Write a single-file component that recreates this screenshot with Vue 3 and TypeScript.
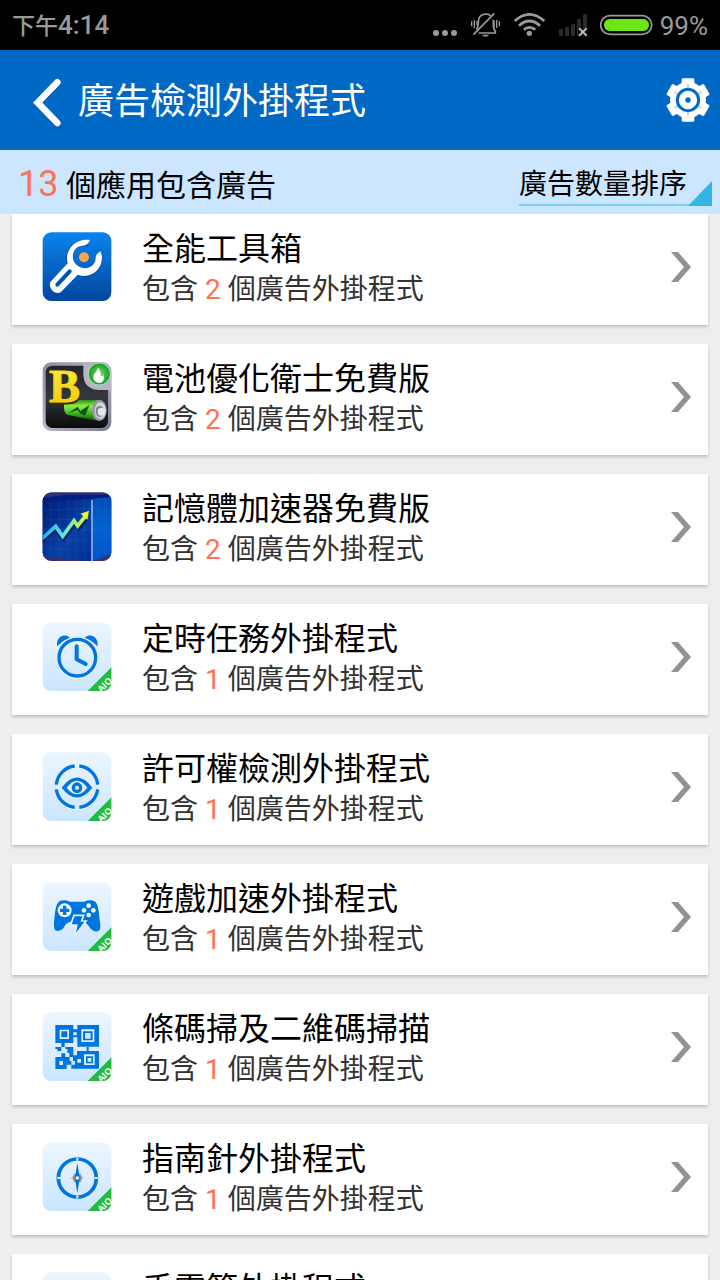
<script setup lang="ts">
import { ref } from 'vue'

type IconKind = 'toolbox' | 'battery' | 'memory' | 'alarm' | 'eye' | 'game' | 'qr' | 'compass' | 'torch'

interface AppEntry {
  name: string
  count: number
  icon: IconKind
  plugin: boolean
}

const total = 13
const sort = ref('count')

const apps: AppEntry[] = [
  { name: '全能工具箱', count: 2, icon: 'toolbox', plugin: false },
  { name: '電池優化衛士免費版', count: 2, icon: 'battery', plugin: false },
  { name: '記憶體加速器免費版', count: 2, icon: 'memory', plugin: false },
  { name: '定時任務外掛程式', count: 1, icon: 'alarm', plugin: true },
  { name: '許可權檢測外掛程式', count: 1, icon: 'eye', plugin: true },
  { name: '遊戲加速外掛程式', count: 1, icon: 'game', plugin: true },
  { name: '條碼掃及二維碼掃描', count: 1, icon: 'qr', plugin: true },
  { name: '指南針外掛程式', count: 1, icon: 'compass', plugin: true },
  { name: '手電筒外掛程式', count: 1, icon: 'torch', plugin: true },
]
</script>

<template>
  <div class="screen">
    <svg class="defs" width="0" height="0" aria-hidden="true">
      <defs>
        <clipPath id="tile"><rect x="38" y="37" width="206" height="206" rx="26" /></clipPath>
        <linearGradient id="g-blue" x1="0" y1="0" x2="0" y2="1">
          <stop offset="0" stop-color="#0a84ee" /><stop offset="1" stop-color="#00459c" />
        </linearGradient>
        <linearGradient id="g-pale" x1="0" y1="0" x2="0" y2="1">
          <stop offset="0" stop-color="#edf6ff" /><stop offset="1" stop-color="#cbe5ff" />
        </linearGradient>
        <linearGradient id="g-steel" x1="0" y1="0" x2="1" y2="1">
          <stop offset="0" stop-color="#8d8d98" /><stop offset="0.5" stop-color="#b5b5c4" /><stop offset="1" stop-color="#77778a" />
        </linearGradient>
        <linearGradient id="g-dark" x1="0" y1="0" x2="0" y2="1">
          <stop offset="0" stop-color="#22262a" /><stop offset="0.5" stop-color="#34383c" /><stop offset="1" stop-color="#0a0a0a" />
        </linearGradient>
        <linearGradient id="g-cell" x1="0" y1="0" x2="0" y2="1">
          <stop offset="0" stop-color="#2a8a10" /><stop offset="0.3" stop-color="#8df04a" /><stop offset="0.65" stop-color="#3cb81c" /><stop offset="1" stop-color="#0f5a08" />
        </linearGradient>
        <linearGradient id="g-gold" x1="0" y1="0" x2="0" y2="1">
          <stop offset="0" stop-color="#fff04a" /><stop offset="1" stop-color="#f0c400" />
        </linearGradient>
        <linearGradient id="g-front" x1="0" y1="0" x2="1" y2="1">
          <stop offset="0" stop-color="#001a78" /><stop offset="0.6" stop-color="#0840a4" /><stop offset="1" stop-color="#002e94" />
        </linearGradient>
        <linearGradient id="g-side" x1="0" y1="0" x2="0" y2="1">
          <stop offset="0" stop-color="#004cba" /><stop offset="0.5" stop-color="#0062d0" /><stop offset="1" stop-color="#0052cc" />
        </linearGradient>
        <linearGradient id="g-trend" gradientUnits="userSpaceOnUse" x1="38" y1="0" x2="178" y2="0">
          <stop offset="0" stop-color="#1ea8f0" /><stop offset="0.45" stop-color="#5ae8dc" /><stop offset="0.8" stop-color="#b8f45a" /><stop offset="1" stop-color="#f0f81e" />
        </linearGradient>
        <radialGradient id="g-leaf">
          <stop offset="0" stop-color="#6fe06a" /><stop offset="1" stop-color="#169a26" />
        </radialGradient>
      </defs>
    </svg>

    <div class="status">
      <span class="clock"><span class="ampm">下午</span>4:14</span>
      <div class="indicators">
        <svg width="26" height="26" viewBox="36 36 78 78" fill="#9a9a9a" aria-hidden="true">
          <circle cx="48" cy="99" r="9" /><circle cx="75" cy="99" r="9" /><circle cx="102" cy="99" r="9" />
        </svg>
        <svg width="31" height="26" viewBox="150 36 93 78" fill="none" stroke="#9a9a9a" aria-hidden="true">
          <path stroke-width="5" d="M169 88 Q175 82 175 70 V66 Q175 44 197 42 Q207 42 213 48 M220 59 V74 Q220 88 226 94 V99 H176 M160 104 L223 40" />
          <path stroke-width="4" d="M155 64 V79 M163 60 V84 M171 62 V76 M222 62 V82 M230 60 V84 M238 64 V79" />
          <path fill="#9a9a9a" stroke="none" d="M185 104 H208 Q197 116 185 104 Z" />
        </svg>
        <svg width="33" height="26" viewBox="279 36 99 78" fill="none" stroke="#9a9a9a" stroke-width="8" aria-hidden="true">
          <path d="M284 63 Q328 23 373 63 M297 77 Q328 49 360 77 M311 89 Q328 75 346 89" />
          <circle cx="328" cy="100" r="8" fill="#9a9a9a" stroke="none" />
        </svg>
        <svg width="30" height="26" viewBox="414 36 90 78" aria-hidden="true">
          <g fill="#2b2b2b">
            <rect x="417" y="87" width="12" height="21" rx="3" /><rect x="435" y="80" width="12" height="28" rx="3" />
            <rect x="453" y="72" width="12" height="36" rx="3" /><path d="M471 60 q0-3 3-3 h6 q3 0 3 3 V83 H474 V108 H471 Z" />
            <path d="M489 45 q0-3 3-3 h6 q3 0 3 3 V81 L489 87 Z" />
          </g>
          <path stroke="#bdbdbd" stroke-width="6" d="M477 85 L500 107 M500 85 L477 107" />
        </svg>
        <svg width="53" height="26" viewBox="537 36 159 78" aria-hidden="true">
          <rect x="539" y="47" width="153" height="56" rx="28" fill="none" stroke="#9a9a9a" stroke-width="5" />
          <rect x="549" y="57" width="135" height="36" rx="17" fill="#6ce715" />
        </svg>
      </div>
      <span class="percent">99%</span>
    </div>

    <header class="bar">
      <button class="back" type="button" aria-label="返回">
        <svg width="32" height="54" viewBox="96 228 96 162" fill="none" stroke-linecap="round" aria-hidden="true">
          <path stroke="#00428a" stroke-opacity="0.5" stroke-width="19" d="M173 252 L113 312 L173 373" />
          <path stroke="#fff" stroke-width="20" d="M172 247 L113 308 L172 369" />
        </svg>
      </button>
      <h1>廣告檢測外掛程式</h1>
      <button class="gear" type="button" aria-label="設定">
        <svg width="44" height="44" viewBox="-66 -66 132 132" aria-hidden="true">
          <g fill="#fff">
            <circle r="54" />
            <rect v-for="a in [0, 60, 120]" :key="a" x="-19" y="-65" width="38" height="130" rx="4" :transform="`rotate(${a})`" />
          </g>
          <path stroke="#b4c4d4" stroke-width="4" d="M0 -48 V-36 M0 48 V36 M-41 -24 L-31 -18 M41 -24 L31 -18 M-41 24 L-31 18 M41 24 L31 18" />
          <circle r="32" fill="none" stroke="#0069c5" stroke-width="9" />
          <circle r="8" fill="#0069c5" />
        </svg>
      </button>
    </header>

    <div class="summary">
      <p class="tally"><span class="total">{{ total }}</span> 個應用包含廣告</p>
      <div class="sort">
        <select v-model="sort" aria-label="排序方式">
          <option value="count">廣告數量排序</option>
        </select>
      </div>
    </div>

    <ul class="list">
      <li v-for="app in apps" :key="app.name">
        <button class="card" type="button">
          <svg class="icon" width="70" height="70" viewBox="36 36 210 210" aria-hidden="true">
            <g clip-path="url(#tile)">
              <rect v-if="app.plugin" x="36" y="36" width="210" height="210" fill="url(#g-pale)" />

              <template v-if="app.icon === 'toolbox'">
                <rect x="36" y="36" width="210" height="210" fill="url(#g-blue)" />
                <path fill="none" stroke="#003c88" stroke-opacity="0.45" stroke-width="19" d="M176 72 A46 46 0 1 0 207 106" />
                <path fill="#fff" d="M180 60 C134 54 102 92 113 130 L63 184 C51 198 72 228 93 216 L143 164 C180 178 219 150 216 108 L211 94 C203 101 196 104 197 117 C195 138 172 150 152 142 C130 133 122 109 134 91 C143 76 157 79 166 75 C176 72 176 66 180 60 Z" />
                <path fill="none" stroke="#0055b2" stroke-width="12" stroke-linecap="round" d="M119 154 L82 194" />
                <circle cx="162" cy="112" r="15" fill="#f9a54c" />
              </template>

              <template v-else-if="app.icon === 'battery'">
                <rect x="36" y="36" width="210" height="210" fill="url(#g-steel)" />
                <rect x="47" y="47" width="187" height="187" rx="20" fill="url(#g-dark)" />
                <path fill="#b4b4c2" d="M160 36 V74 Q162 118 208 120 H246 V36 Z" />
                <circle cx="208" cy="72" r="33" fill="url(#g-leaf)" stroke="#e4f8e0" stroke-width="2" />
                <path fill="#fff" d="M203 50 C204 66 190 68 190 82 C190 94 200 99 209 99 C220 98 226 86 219 72 C219 82 211 82 212 72 C213 62 206 58 203 50 Z" />
                <path fill="#111" fill-opacity="0.6" d="M112 198 Q170 214 214 226 V212 H120 Z" />
                <path fill="url(#g-cell)" d="M112 149 Q100 154 102 174 Q103 190 112 194 L202 212 V150 Z" />
                <ellipse cx="208" cy="181" rx="22" ry="32" fill="#9898a4" />
                <ellipse cx="211" cy="182" rx="17" ry="25" fill="#d8d8e0" />
                <ellipse cx="209" cy="184" rx="12" ry="17" fill="#80808e" />
                <ellipse cx="214" cy="185" rx="11" ry="12" fill="#e6e6ee" />
                <path fill="#125518" d="M115 190 L143 170 L151 184 L179 164 L165 197 L151 191 L143 180 Z" />
                <text x="60" y="161" class="letter" fill="#3c3200" stroke="#3c3200">B</text>
                <text x="57" y="157" class="letter" fill="url(#g-gold)" stroke="#f6d820">B</text>
              </template>

              <template v-else-if="app.icon === 'memory'">
                <rect x="36" y="36" width="210" height="210" fill="#303074" />
                <path fill="#001e86" d="M36 54 L110 44 H246 V54 L186 62 L36 66 Z" />
                <path fill="url(#g-front)" d="M36 65 L185 56 V244 L36 228 Z" />
                <path fill="url(#g-side)" d="M186 57 L246 50 V221 L186 244 Z" />
                <path stroke="#3568c8" stroke-opacity="0.35" stroke-width="2" d="M62 62 V232 M88 61 V234 M114 60 V236 M140 59 V239 M164 58 V241 M36 90 L185 85 M36 120 L185 117 M36 150 L185 150 M36 178 L185 182 M36 204 L185 213 M204 55 V235 M224 53 V230 M186 117 L246 108 M186 150 L246 142 M186 182 L246 172 M186 213 L246 200" />
                <path stroke="#b4c8f0" stroke-width="4" d="M186 60 V244" />
                <path fill="none" stroke="#00154e" stroke-opacity="0.7" stroke-width="11" d="M36 184 L78 148 L100 178 L134 130 L146 146 L172 114" />
                <path fill="none" stroke="url(#g-trend)" stroke-width="11" d="M36 176 L77 139 L98 169 L132 122 L143 138 L168 106" />
                <path fill="#e4f82e" d="M177 92 L152 101 L172 120 Z" />
              </template>

              <g v-else-if="app.icon === 'alarm'" fill="none" stroke="#0075dd">
                <circle cx="142" cy="147" r="59" stroke="#fff" stroke-width="4" stroke-opacity="0.6" />
                <circle cx="142" cy="143" r="55" stroke-width="10" />
                <path stroke-width="12" stroke-linecap="round" stroke-linejoin="round" d="M140 109 V148 L167 162" />
                <path fill="#0075dd" stroke="none" d="M82 109 C76 88 98 65 120 83 Q99 90 82 109 Z M202 109 C208 88 186 65 164 83 Q185 90 202 109 Z" />
              </g>

              <g v-else-if="app.icon === 'eye'" fill="none" stroke="#0075dd">
                <path stroke="#fff" stroke-opacity="0.8" stroke-width="4" d="M78 153 A63 63 0 0 0 134 209 M148 209 A63 63 0 0 0 204 153" />
                <path stroke-width="10" d="M79 134 A62 62 0 0 1 134 78 M148 78 A62 62 0 0 1 203 134 M203 148 A62 62 0 0 1 148 202 M134 202 A62 62 0 0 1 79 148" />
                <path fill="#0075dd" stroke="none" d="M95 143 Q141 82 187 143 Q141 202 95 143 Z" />
                <path fill="#e6f2ff" stroke="none" d="M110 143 Q141 101 172 143 Q141 183 110 143 Z" />
                <circle cx="141" cy="143" r="16" fill="#0075dd" stroke="none" />
                <circle cx="141" cy="143" r="6" fill="#fff" stroke="none" />
              </g>

              <g v-else-if="app.icon === 'game'" fill="#0075dd">
                <path d="M88 94 Q104 87 119 95 H163 Q180 87 196 95 Q205 103 208 143 Q214 173 208 181 Q196 190 182 176 Q170 158 159 154 L121 155 Q108 157 100 175 Q89 187 76 181 Q69 175 74 137 Q77 102 88 94 Z" />
                <circle cx="104" cy="121" r="21" fill="#f2f9ff" />
                <path d="M99 107 h10 v9 h9 v10 h-9 v9 h-10 v-9 h-9 v-10 h9 Z" />
                <g fill="#f2f9ff">
                  <circle cx="176" cy="107" r="7" /><circle cx="176" cy="135" r="7" /><circle cx="162" cy="121" r="7" /><circle cx="190" cy="121" r="7" />
                </g>
                <path stroke="#e4f2ff" stroke-width="5" d="M132 136 H161 L155 153 H168 L134 198 L140 165 H122 Z" />
              </g>

              <template v-else-if="app.icon === 'qr'">
                <path fill="#0075dd" fill-rule="evenodd" d="M76 75 H130 V88 H142 V75 H207 V140 H142 V112 H130 V129 H104 V141 H94 V129 H76 Z M89 89 V117 H117 V89 Z M130 97 V106 H140 V97 Z M154 88 V126 H193 V88 Z" />
                <path fill="#0075dd" d="M94 94 H112 V112 H94 Z M159 94 H188 V121 H159 Z" />
                <path fill="#cfe6fd" d="M165 99 H182 V116 H165 Z" />
                <path fill="#0075dd" fill-rule="evenodd" d="M76 141 H94 V153 H82 V147 H76 Z M106 141 H130 V166 H141 V153 H170 V141 H176 V153 H207 V206 H124 V194 H110 V207 H76 V171 H94 V160 H106 V171 H118 V159 H112 V147 H106 Z M88 183 V195 H99 V183 Z M119 171 V183 H124 V194 H135 V183 H129 V171 Z M142 177 V188 H153 V177 Z M162 163 V195 H194 V163 Z" />
                <path fill="#0075dd" d="M168 169 H189 V190 H168 Z" />
                <path fill="#e3f1ff" d="M173 174 H184 V185 H173 Z" />
              </template>

              <template v-else-if="app.icon === 'compass'">
                <circle cx="142" cy="144" r="57" fill="none" stroke="#0075dd" stroke-width="11" />
                <path stroke="#dceeff" stroke-width="6" d="M142 83 V92 M142 196 V205 M82 144 H91 M194 144 H203" />
                <path fill="#b9c2ca" d="M142 126 L146 134 L156 128 L151 139 L164 144 L151 148 L156 158 L146 154 L142 162 L138 154 L128 158 L133 148 L118 144 L133 139 L128 128 L138 134 Z" />
                <circle cx="142" cy="144" r="14" fill="#89929a" />
                <path fill="#0070cc" d="M142 98 L149 144 L142 189 L135 144 Z" />
                <circle cx="142" cy="144" r="5" fill="#fff" />
              </template>

              <g v-else fill="#0075dd">
                <path d="M110 80 H174 V104 L160 124 V204 H124 V124 L110 104 Z" />
                <circle cx="142" cy="144" r="8" fill="#fff" />
              </g>

              <path v-if="app.plugin" fill="#22bc3b" d="M170 246 L246 170 V246 Z" />
            </g>
            <text v-if="app.plugin" x="231" y="231" class="aio" text-anchor="middle" transform="rotate(-45 231 231)">AIO</text>
          </svg>
          <span class="text">
            <span class="name">{{ app.name }}</span>
            <span class="detail">包含 <em>{{ app.count }}</em> 個廣告外掛程式</span>
          </span>
          <svg class="chevron" width="20" height="30" viewBox="0 0 20 30" aria-hidden="true">
            <path fill="#929292" d="M0 0 H7 L20 15 L7 30 H0 L13 15 Z" />
          </svg>
        </button>
      </li>
    </ul>
  </div>
</template>

<style>
body {
  margin: 0;
  background: #eee;
}
</style>

<style scoped>
.screen {
  display: flex;
  flex-direction: column;
  height: 100vh;
  overflow: hidden;
  background: #eee;
  color: #000;
  font-family: Roboto, "Noto Sans CJK TC", sans-serif;
}

.defs {
  position: absolute;
}

button,
select {
  padding: 0;
  border: 0;
  background: none;
  color: inherit;
  font: inherit;
  cursor: pointer;
}

svg {
  display: block;
  flex: none;
}

.status {
  display: flex;
  flex: none;
  align-items: center;
  height: 50px;
  padding: 0 12px;
  background: #000;
  color: #9a9a9a;
  font-size: 26px;
  line-height: 50px;
}

.clock {
  flex: 1;
  padding-top: 2px;
  font-weight: 500;
}

.ampm {
  font-size: 23px;
}

.percent {
  padding-top: 2px;
}

.indicators {
  display: flex;
  gap: 12px;
  margin-right: 7px;
}

.bar {
  display: flex;
  flex: none;
  align-items: center;
  height: 100px;
  padding: 0 10px 0 32px;
  background: #0069c5;
  color: #fff;
}

h1 {
  flex: 1;
  margin: 0 0 0 14px;
  padding-top: 4px;
  font-size: 36px;
  font-weight: 400;
  line-height: 52px;
}

.back {
  padding-top: 6px;
}

.summary {
  display: flex;
  flex: none;
  align-items: center;
  justify-content: space-between;
  height: 64px;
  padding: 0 8px 0 18px;
  background: #cce6ff;
}

.tally {
  margin: 0;
  padding-top: 6px;
  font-size: 30px;
  line-height: 40px;
}

.total {
  color: #ff7152;
  font-size: 36px;
}

.sort {
  position: relative;
  margin-top: 2px;
  border-bottom: 2px solid #7dd0f8;
}

.sort::after {
  position: absolute;
  right: 0;
  bottom: -2px;
  width: 24px;
  height: 25px;
  background: #33b5e5;
  clip-path: polygon(100% 0, 100% 100%, 0 100%);
  content: "";
  pointer-events: none;
}

select {
  display: block;
  box-sizing: border-box;
  height: 44px;
  padding-top: 4px;
  padding-right: 24px;
  appearance: none;
  font-size: 28px;
  outline: none;
}

.list {
  display: flex;
  flex: 1;
  flex-direction: column;
  gap: 19px;
  min-height: 0;
  margin: 0;
  padding: 0 12px;
  overflow-y: auto;
  scrollbar-width: none;
  list-style: none;
}

.card {
  display: flex;
  align-items: center;
  width: 100%;
  height: 111px;
  padding: 0 17px 6px 30px;
  background: #fff;
  box-shadow: 0 2px 3px #00000033;
  text-align: left;
}

.icon {
  overflow: visible;
}

.text {
  display: flex;
  flex: 1;
  flex-direction: column;
  margin-left: 30px;
  padding-top: 6px;
}

.name {
  font-size: 32px;
  line-height: 40px;
}

.detail {
  color: #333;
  font-size: 28px;
  line-height: 42px;
}

em {
  color: #ff7152;
  font-style: normal;
}

.letter {
  font: bold 140px "Liberation Serif", serif;
  stroke-width: 3px;
}

.aio {
  fill: #fff;
  font: bold 27px "Open Sans", sans-serif;
}
</style>
